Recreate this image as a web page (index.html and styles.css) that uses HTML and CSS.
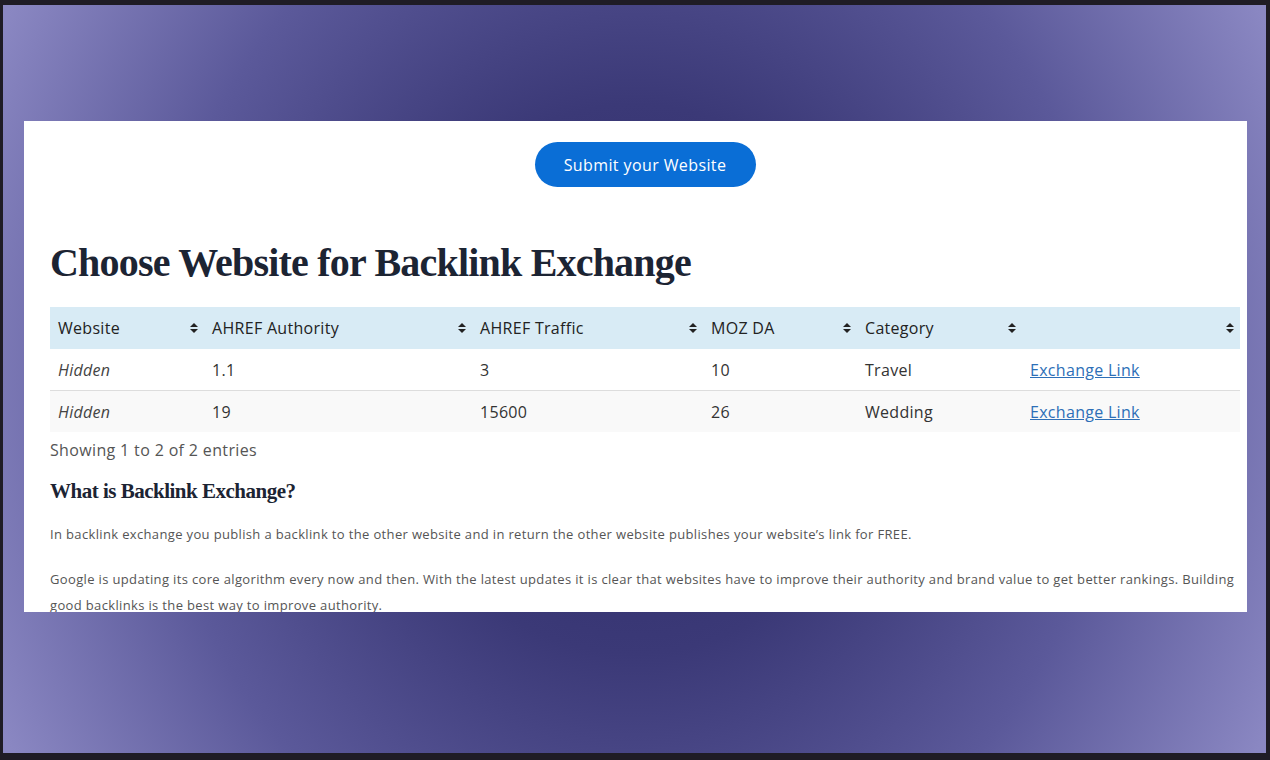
FILE: index.html
```html
<!DOCTYPE html>
<html>
<head>
<meta charset="utf-8">
<link rel="stylesheet" href="styles.css">
</head>
<body>
<div class="frame">
  <div class="stage">
    <div class="card">
      <div class="btn-row"><a class="submit-btn">Submit your Website</a></div>
      <h1 class="title">Choose Website for Backlink Exchange</h1>
      <table class="sites">
        <thead>
          <tr>
            <th class="c1">Website<span class="sort"></span></th>
            <th class="c2">AHREF Authority<span class="sort"></span></th>
            <th class="c3">AHREF Traffic<span class="sort"></span></th>
            <th class="c4">MOZ DA<span class="sort"></span></th>
            <th class="c5">Category<span class="sort"></span></th>
            <th class="c6"><span class="sort"></span></th>
          </tr>
        </thead>
        <tbody>
          <tr class="odd">
            <td><em>Hidden</em></td><td>1.1</td><td>3</td><td>10</td><td>Travel</td><td><a class="xlink">Exchange Link</a></td>
          </tr>
          <tr class="even">
            <td><em>Hidden</em></td><td>19</td><td>15600</td><td>26</td><td>Wedding</td><td><a class="xlink">Exchange Link</a></td>
          </tr>
        </tbody>
      </table>
      <div class="info">Showing 1 to 2 of 2 entries</div>
      <h2 class="sub">What is Backlink Exchange?</h2>
      <p class="para">In backlink exchange you publish a backlink to the other website and in return the other website publishes your website’s link for FREE.</p>
      <p class="para">Google is updating its core algorithm every now and then. With the latest updates it is clear that websites have to improve their authority and brand value to get better rankings. Building good backlinks is the best way to improve authority.</p>
    </div>
  </div>
</div>
</body>
</html>
```
FILE: styles.css
```css
html, body { margin: 0; padding: 0; }
body {
  background: #1f1c25;
  width: 1270px;
  height: 760px;
  overflow: hidden;
  font-family: "Open Sans", "Liberation Sans", sans-serif;
}
.frame {
  box-sizing: border-box;
  width: 1270px;
  height: 760px;
  padding: 5px 4px 7px 3px;
}
.stage {
  box-sizing: border-box;
  height: 100%;
  padding: 116px 19px 0 21px;
  background: radial-gradient(ellipse 56% 105% at 50% 50%, #2c2a68 0%, #3b3977 35%, #5b599a 68%, #8a87c2 100%);
}
.card {
  background: #fff;
  height: 491px;
  overflow: hidden;
  padding: 21px 7px 0 26px;
  box-sizing: border-box;
}
.btn-row { display: flex; justify-content: center; }
.submit-btn {
  display: flex;
  align-items: center;
  justify-content: center;
  width: 221px;
  height: 45px;
  border-radius: 23px;
  background: #0a6ed6;
  color: #fff;
  font-size: 16px;
  letter-spacing: 0.4px;
  font-weight: 500;
}
.title {
  font-family: "Liberation Serif", "DejaVu Serif", serif;
  font-weight: 700;
  font-size: 40px;
  color: #1c2433;
  margin: 52px 0 20px 0;
  letter-spacing: -0.8px;
  line-height: 48px;
}
.sites {
  width: 100%;
  border-collapse: collapse;
  font-size: 16px;
  letter-spacing: 0.3px;
  color: #333;
}
.sites th {
  background: #d8ebf5;
  height: 42px;
  text-align: left;
  font-weight: 500;
  color: #222;
  padding: 0 8px;
  position: relative;
}
.sites td { height: 41px; padding: 0 8px; }
.sites td em { color: #444; }
.sites tr.odd td { background: #fff; border-bottom: 1px solid #ddd; }
.sites tr.even td { background: #f9f9f9; }
.c1 { width: 138px; }
.c2 { width: 252px; }
.c3 { width: 215px; }
.c4 { width: 138px; }
.c5 { width: 149px; }
.sort {
  position: absolute;
  right: 6px;
  top: 16px;
  width: 8px;
  height: 10px;
}
.sort::before, .sort::after {
  content: "";
  position: absolute;
  left: 0;
  border-left: 4px solid transparent;
  border-right: 4px solid transparent;
}
.sort::before { top: 0; border-bottom: 4px solid #222; }
.sort::after { bottom: 0; border-top: 4px solid #222; }
.xlink { color: #2d6fb7; text-decoration: underline; }
.info { margin-top: 7px; font-size: 16px; letter-spacing: 0.35px; color: #555; }
.sub {
  font-family: "Liberation Serif", "DejaVu Serif", serif;
  font-weight: 700;
  font-size: 21px;
  letter-spacing: -0.5px;
  color: #1c2433;
  margin: 18px 0 17px 0;
}
.para {
  font-size: 13px;
  letter-spacing: 0.35px;
  color: #555;
  line-height: 26px;
  margin: 0 0 19px 0;
}
```
